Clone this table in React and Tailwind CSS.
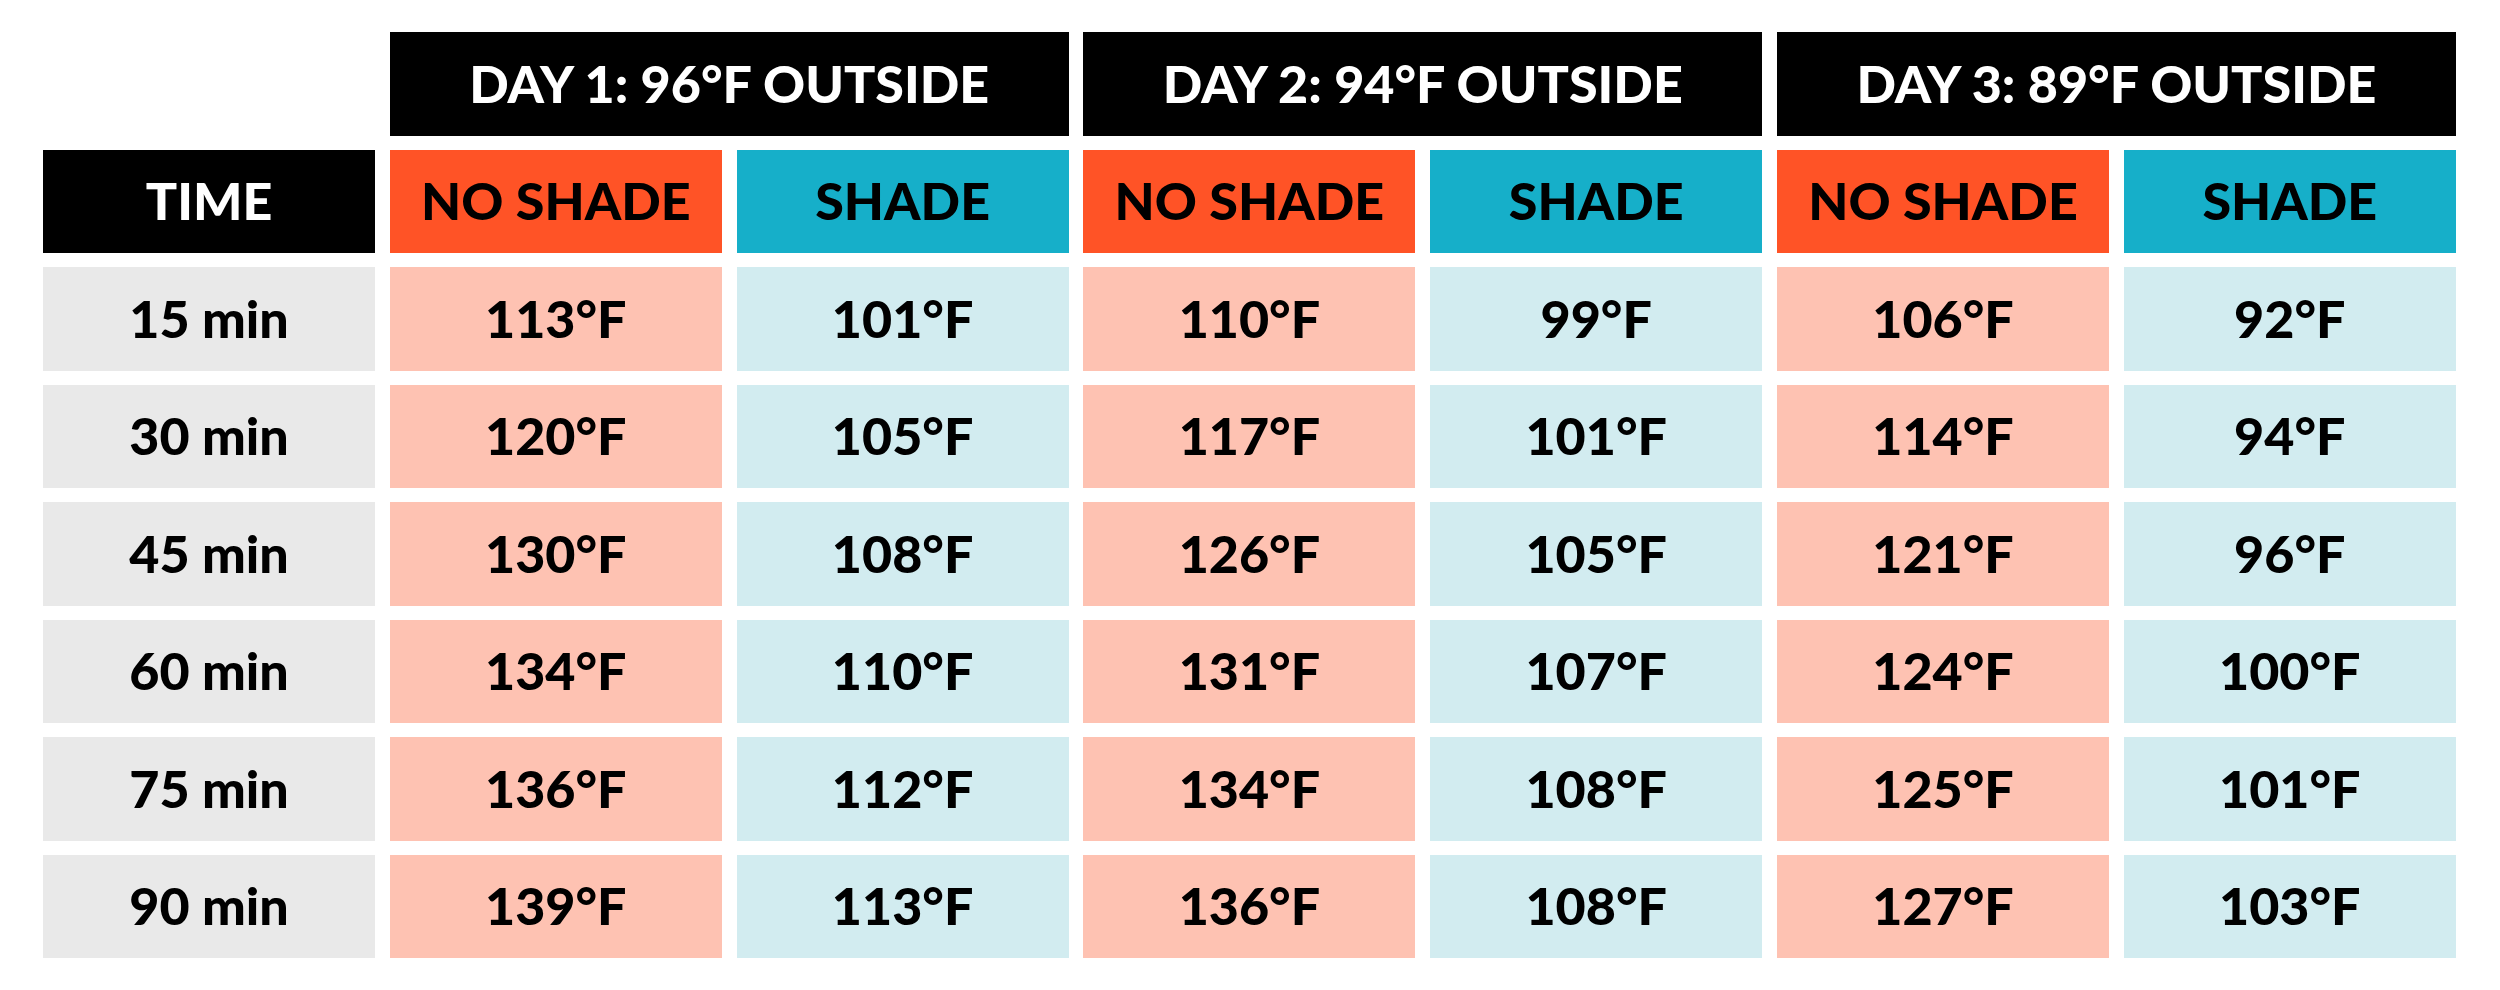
const days = [
  { label: 'DAY 1: 96°F OUTSIDE' },
  { label: 'DAY 2: 94°F OUTSIDE' },
  { label: 'DAY 3: 89°F OUTSIDE' },
];

const rows = [
  ['15 min', '113', '101', '110', '99', '106', '92'],
  ['30 min', '120', '105', '117', '101', '114', '94'],
  ['45 min', '130', '108', '126', '105', '121', '96'],
  ['60 min', '134', '110', '131', '107', '124', '100'],
  ['75 min', '136', '112', '134', '108', '125', '101'],
  ['90 min', '139', '113', '136', '108', '127', '103'],
];

const cell = 'flex items-center justify-center pb-[2px] text-[52px] font-black leading-none';

export default function App() {
  return (
    <div
      className="w-[2500px] h-[990px] bg-white pl-[43px] pt-[32px]"
      style={{ fontFamily: 'Lato, "Noto Sans", sans-serif' }}
    >
      <div className="grid grid-cols-[repeat(7,332px)] auto-rows-[103.5px] gap-x-[14.8px] gap-y-[14px]">
        <div />
        {days.map((d) => (
          <div key={d.label} className={`${cell} col-span-2 bg-black text-white`}>
            {d.label}
          </div>
        ))}

        <div className={`${cell} bg-black text-white`}>TIME</div>
        {days.map((d) => (
          <div key={d.label} className="contents">
            <div className={`${cell} bg-[#ff5326] text-black`}>NO SHADE</div>
            <div className={`${cell} bg-[#16afc9] text-black`}>SHADE</div>
          </div>
        ))}

        {rows.map((r) => (
          <div key={r[0]} className="contents">
            <div className={`${cell} bg-[#e9e9e9] text-black`}>{r[0]}</div>
            {r.slice(1).map((v, i) => (
              <div
                key={i}
                className={`${cell} text-black ${i % 2 === 0 ? 'bg-[#fec2b2]' : 'bg-[#d2ecf0]'}`}
              >
                {v}°F
              </div>
            ))}
          </div>
        ))}
      </div>
    </div>
  );
}
